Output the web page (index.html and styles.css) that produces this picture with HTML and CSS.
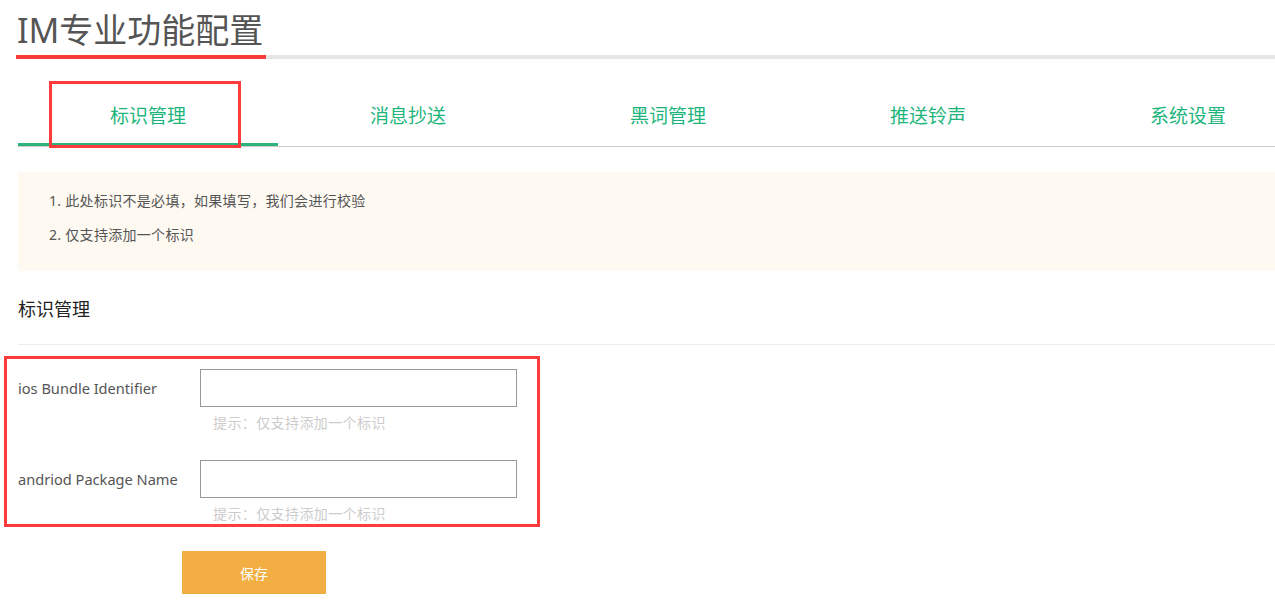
FILE: index.html
```html
<!DOCTYPE html>
<html lang="zh-CN">
<head>
    <meta charset="UTF-8">
    <meta name="viewport" content="width=device-width, initial-scale=1.0">
    <title>IM专业功能配置</title>
    <link rel="stylesheet" href="styles.css">
</head>
<body>
    <div class="page">
        <h1 class="page-title"><span>IM专业功能配置</span></h1>

        <ul class="tabs">
            <li class="tab active">标识管理</li>
            <li class="tab">消息抄送</li>
            <li class="tab">黑词管理</li>
            <li class="tab">推送铃声</li>
            <li class="tab">系统设置</li>
        </ul>

        <div class="tips">
            <p>1. 此处标识不是必填，如果填写，我们会进行校验</p>
            <p>2. 仅支持添加一个标识</p>
        </div>

        <h2 class="section-title">标识管理</h2>

        <div class="form">
            <div class="form-row">
                <label for="bundle-id">ios Bundle Identifier</label>
                <input type="text" id="bundle-id">
            </div>
            <div class="hint">提示：仅支持添加一个标识</div>

            <div class="form-row">
                <label for="package-name">andriod Package Name</label>
                <input type="text" id="package-name">
            </div>
            <div class="hint">提示：仅支持添加一个标识</div>

            <button class="save-button">保存</button>
        </div>
    </div>

    <div class="mark mark-tab"></div>
    <div class="mark mark-form"></div>
</body>
</html>
```

FILE: styles.css
```css
body {
    font-family: "Noto Sans", "Noto Sans CJK SC", sans-serif;
    background-color: #FFFFFF;
    color: #555555;
    margin: 0;
    overflow: hidden;
}

.page {
    padding: 10px 0 0 16px;
    overflow: hidden;
}

.page-title {
    margin: 0;
    font-size: 34px;
    font-weight: normal;
    line-height: 40px;
    color: #555555;
    border-bottom: 4px solid #E6E6E6;
}

.page-title span {
    display: inline-block;
    padding: 0 3px 5px 1px;
    border-bottom: 4px solid #FF3B3B;
    margin-bottom: -4px;
}

.tabs {
    display: flex;
    list-style: none;
    margin: 24px 0 0 2px;
    padding: 0;
    border-bottom: 1px solid #CCCCCC;
}

.tab {
    flex: 0 0 260px;
    height: 54px;
    padding-top: 6px;
    line-height: 54px;
    text-align: center;
    font-size: 19px;
    color: #1DB57C;
    border-bottom: 3px solid transparent;
}

.tab.active {
    border-bottom-color: #2BB37A;
}

.tips {
    margin: 25px 0 0 2px;
    padding: 12px 31px 19px;
    background-color: #FEF9F1;
    font-size: 14px;
    line-height: 34px;
    letter-spacing: 0.3px;
    color: #555555;
}

.tips p {
    margin: 0;
}

.section-title {
    margin: 24px 0 0 2px;
    padding-bottom: 21px;
    font-size: 18px;
    font-weight: normal;
    line-height: 28px;
    color: #222222;
    border-bottom: 1px solid #EEEEEE;
}

.form {
    padding: 24px 0 0 2px;
}

.form-row {
    display: flex;
    align-items: center;
}

.form-row label {
    width: 182px;
    font-size: 14.6px;
    margin-top: -1px;
    color: #555555;
}

.form-row input {
    box-sizing: border-box;
    width: 317px;
    height: 38px;
    margin: 0;
    border: 1px solid #999999;
    border-radius: 0;
    padding: 0 8px;
    font-size: 14px;
}

.hint {
    margin: 6px 0 27px 195px;
    font-size: 14px;
    line-height: 20px;
    letter-spacing: 0.4px;
    color: #CCCCCC;
}

.save-button {
    display: block;
    width: 144px;
    height: 43px;
    margin-left: 164px;
    background-color: #F2AE43;
    border: none;
    color: #FFFFFF;
    font-family: inherit;
    font-size: 14px;
    cursor: pointer;
}

.mark {
    position: absolute;
    border: 3px solid #FF3B3B;
    box-sizing: border-box;
}

.mark-tab {
    left: 49px;
    top: 81px;
    width: 192px;
    height: 67px;
}

.mark-form {
    left: 4px;
    top: 356px;
    width: 536px;
    height: 171px;
}
```
